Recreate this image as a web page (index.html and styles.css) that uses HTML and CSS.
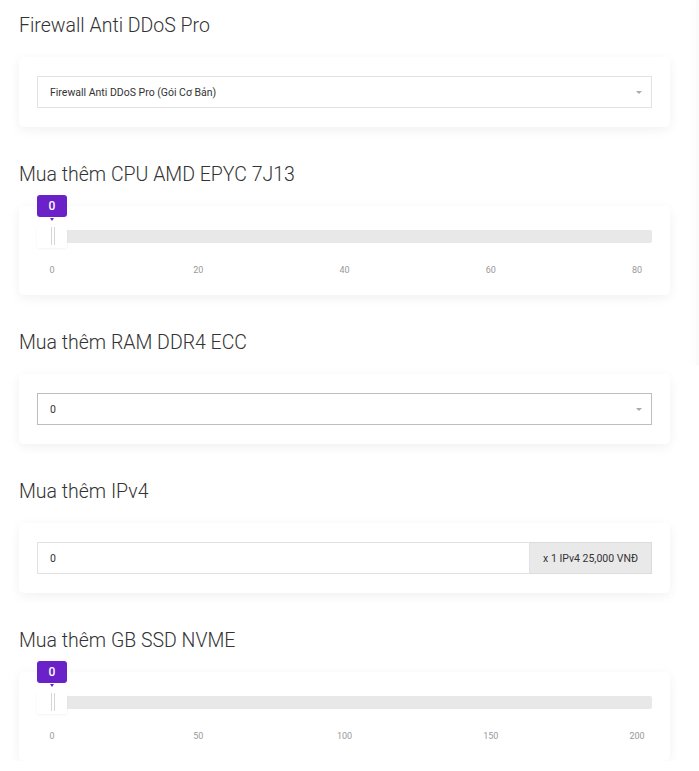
FILE: index.html
```html
<!DOCTYPE html>
<html lang="vi">
<head>
  <meta charset="UTF-8">
  <title>Cấu hình thêm</title>
  <link rel="stylesheet" href="styles.css">
</head>
<body>
  <div class="page">
    <div class="main">

      <div class="section">
        <h2>Firewall Anti DDoS Pro</h2>
        <div class="card">
          <div class="select">
            <span>Firewall Anti DDoS Pro (Gói Cơ Bản)</span>
            <span class="caret"></span>
          </div>
        </div>
      </div>

      <div class="section">
        <h2>Mua thêm CPU AMD EPYC 7J13</h2>
        <div class="card">
          <div class="slider">
            <div class="slider-badge">0</div>
            <div class="slider-line">
              <div class="slider-handle"></div>
            </div>
            <div class="slider-grid">
              <span>0</span><span>20</span><span>40</span><span>60</span><span>80</span>
            </div>
          </div>
        </div>
      </div>

      <div class="section">
        <h2>Mua thêm RAM DDR4 ECC</h2>
        <div class="card">
          <div class="select active">
            <span>0</span>
            <span class="caret"></span>
          </div>
        </div>
      </div>

      <div class="section">
        <h2>Mua thêm IPv4</h2>
        <div class="card">
          <div class="input-group">
            <input type="text" value="0">
            <span class="addon">x 1 IPv4 25,000 VNĐ</span>
          </div>
        </div>
      </div>

      <div class="section">
        <h2>Mua thêm GB SSD NVME</h2>
        <div class="card">
          <div class="slider">
            <div class="slider-badge">0</div>
            <div class="slider-line">
              <div class="slider-handle"></div>
            </div>
            <div class="slider-grid">
              <span>0</span><span>50</span><span>100</span><span>150</span><span>200</span>
            </div>
          </div>
        </div>
      </div>

    </div>
    <div class="side"></div>
  </div>
</body>
</html>
```

FILE: styles.css
```css
body {
  margin: 0;
  background-color: #fff;
  color: #333;
  font-family: Roboto, "Noto Sans", sans-serif;
  overflow: hidden;
}
.page {
  display: flex;
  padding: 14px 0 0 19px;
}
.main {
  width: 651px;
  flex-shrink: 0;
}
.side {
  flex-shrink: 0;
  width: 3px;
  height: 365px;
  margin-top: -14px;
  margin-left: 26px;
  background-color: #fafafa;
  box-shadow: 0 0 12px rgba(0, 0, 0, 0.05);
}
.section + .section {
  margin-top: 36px;
}
h2 {
  margin: 0 0 19px;
  font-size: 19.5px;
  line-height: 24px;
  font-weight: 300;
  color: #333;
}
.card {
  background-color: #fff;
  border-radius: 5px;
  padding: 19px 18px 19px;
  box-shadow: 0 3px 12px rgba(0, 0, 0, 0.06);
}

/* select */
.select {
  height: 32px;
  box-sizing: border-box;
  border: 1px solid #e2e2e2;
  display: flex;
  align-items: center;
  justify-content: space-between;
  padding: 0 9px 0 12px;
  font-size: 10.5px;
  color: #333;
}
.select.active {
  border-color: #bdbdbd;
}
.caret {
  width: 0;
  height: 0;
  border-left: 3px solid transparent;
  border-right: 3px solid transparent;
  border-top: 3px solid #aaa;
}

/* input with addon */
.input-group {
  display: flex;
  height: 32px;
}
.input-group input {
  flex: 1;
  box-sizing: border-box;
  height: 32px;
  border: 1px solid #e2e2e2;
  padding: 0 12px;
  font-family: inherit;
  font-size: 10.5px;
  color: #333;
  outline: none;
}
.addon {
  width: 122px;
  box-sizing: border-box;
  display: flex;
  align-items: center;
  justify-content: center;
  background-color: #e9e9ea;
  border: 1px solid #dcdcdc;
  border-left: none;
  font-size: 10.5px;
  color: #333;
}

/* range slider */
.slider {
  position: relative;
}
.slider-badge {
  position: absolute;
  left: 0;
  top: -30px;
  width: 30px;
  height: 22px;
  border-radius: 3px;
  background-color: #6b21c8;
  color: #fff;
  font-size: 12px;
  font-weight: 500;
  line-height: 22px;
  text-align: center;
}
.slider-badge::after {
  content: "";
  position: absolute;
  left: 13px;
  bottom: -4px;
  border-left: 2px solid transparent;
  border-right: 2px solid transparent;
  border-top: 3px solid #6b21c8;
}
.slider-line {
  position: relative;
  height: 23px;
}
.slider-line::before {
  content: "";
  position: absolute;
  left: 0;
  right: 0;
  top: 5px;
  height: 13px;
  border-radius: 2px;
  background-color: #e8e8e8;
}
.slider-handle {
  position: absolute;
  left: 0;
  top: 0;
  width: 30px;
  height: 23px;
  background-color: #fff;
  border-radius: 2px;
  box-shadow: 0 1px 3px rgba(0, 0, 0, 0.05);
}
.slider-handle::before,
.slider-handle::after {
  content: "";
  position: absolute;
  top: 2px;
  height: 18px;
  width: 1px;
  background-color: #d6d6d6;
}
.slider-handle::before {
  left: 14px;
}
.slider-handle::after {
  left: 17px;
}
.slider-grid {
  display: flex;
  justify-content: space-between;
  padding: 0 15px;
  margin-top: 16px;
  height: 12px;
}
.slider-grid span {
  width: 0;
  display: flex;
  justify-content: center;
  font-size: 9px;
  line-height: 12px;
  color: #999;
  white-space: nowrap;
}
```
